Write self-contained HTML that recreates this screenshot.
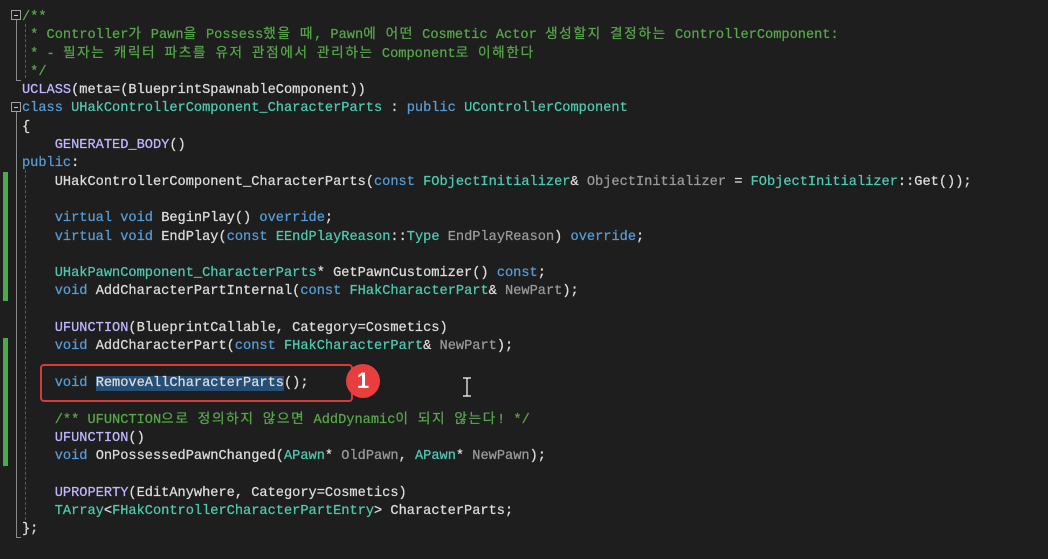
<!DOCTYPE html>
<html><head><meta charset="utf-8"><style>
body{margin:0;background:#1e1e1e;width:1048px;height:559px;overflow:hidden;position:relative}
.c{position:absolute;left:22px;top:9px;font-family:"Liberation Mono","Noto Sans CJK KR",monospace;font-size:13.65px;line-height:18.3px;color:#dcdcdc;white-space:pre;-webkit-text-stroke:0.25px}
.k{letter-spacing:1.65px}
.cm{color:#57a64a}.kw{color:#569cd6}.ty{color:#4ec9b0}.m{color:#beb7ff}.p{color:#9a9a9a}.f{color:#dcdcdc}
.bar{position:absolute;left:3px;width:5px;background:#4caa4c}
.box{position:absolute;left:11px;width:8px;height:8px;border:1px solid #a0a0a0}
.box:after{content:"";position:absolute;left:2px;top:4px;width:4px;height:1px;background:#c8c8c8}
.vl{position:absolute;left:16px;width:1px;background:#8a8a8a}
.dl{position:absolute;left:25px;width:0;border-left:1px dashed #5a5a5a}
.sel{background:#264f78}
</style></head><body>
<div class="bar" style="top:172px;height:129px"></div>
<div class="bar" style="top:338px;height:128px"></div>
<div class="box" style="top:10px"></div>
<div class="vl" style="top:20px;height:60px"></div>
<div style="position:absolute;left:16px;top:80px;width:5px;height:1px;background:#8a8a8a"></div>
<div class="dl" style="top:24px;height:54px"></div>
<div class="box" style="top:102px"></div>
<div class="vl" style="top:112px;height:425px"></div>
<div style="position:absolute;left:16px;top:537px;width:5px;height:1px;background:#8a8a8a"></div>
<div class="dl" style="top:170px;height:360px"></div>
<div class="c"><span class="cm">/**
 * Controller<span class="k">가</span> Pawn<span class="k">을</span> Possess<span class="k">했을</span> <span class="k">때</span>, Pawn<span class="k">에</span> <span class="k">어떤</span> Cosmetic Actor <span class="k">생성할지</span> <span class="k">결정하는</span> ControllerComponent:
 * - <span class="k">필자는</span> <span class="k">캐릭터</span> <span class="k">파츠를</span> <span class="k">유저</span> <span class="k">관점에서</span> <span class="k">관리하는</span> Component<span class="k">로</span> <span class="k">이해한다</span>
 */</span>
<span class="m">UCLASS</span>(meta=(BlueprintSpawnableComponent))
<span class="kw">class</span> <span class="ty">UHakControllerComponent_CharacterParts</span> : <span class="kw">public</span> <span class="ty">UControllerComponent</span>
{
    <span class="m">GENERATED_BODY</span>()
<span class="kw">public</span>:
    <span class="f">UHakControllerComponent_CharacterParts</span>(<span class="kw">const</span> <span class="ty">FObjectInitializer</span>&amp; <span class="p">ObjectInitializer</span> = <span class="ty">FObjectInitializer</span>::<span class="f">Get</span>());

    <span class="kw">virtual</span> <span class="kw">void</span> <span class="f">BeginPlay</span>() <span class="kw">override</span>;
    <span class="kw">virtual</span> <span class="kw">void</span> <span class="f">EndPlay</span>(<span class="kw">const</span> <span class="ty">EEndPlayReason</span>::<span class="ty">Type</span> <span class="p">EndPlayReason</span>) <span class="kw">override</span>;

    <span class="ty">UHakPawnComponent_CharacterParts</span>* <span class="f">GetPawnCustomizer</span>() <span class="kw">const</span>;
    <span class="kw">void</span> <span class="f">AddCharacterPartInternal</span>(<span class="kw">const</span> <span class="ty">FHakCharacterPart</span>&amp; <span class="p">NewPart</span>);

    <span class="m">UFUNCTION</span>(BlueprintCallable, Category=Cosmetics)
    <span class="kw">void</span> <span class="f">AddCharacterPart</span>(<span class="kw">const</span> <span class="ty">FHakCharacterPart</span>&amp; <span class="p">NewPart</span>);

    <span class="kw">void</span> <span class="f sel">RemoveAllCharacterParts</span>();

    <span class="cm">/** UFUNCTION<span class="k">으로</span> <span class="k">정의하지</span> <span class="k">않으면</span> AddDynamic<span class="k">이</span> <span class="k">되지</span> <span class="k">않는다</span>! */</span>
    <span class="m">UFUNCTION</span>()
    <span class="kw">void</span> <span class="f">OnPossessedPawnChanged</span>(<span class="ty">APawn</span>* <span class="p">OldPawn</span>, <span class="ty">APawn</span>* <span class="p">NewPawn</span>);

    <span class="m">UPROPERTY</span>(EditAnywhere, Category=Cosmetics)
    <span class="ty">TArray</span>&lt;<span class="ty">FHakControllerCharacterPartEntry</span>&gt; CharacterParts;
};</div>
<div style="position:absolute;left:40px;top:364px;width:309px;height:34px;border:2px solid #d83a3a;border-radius:4px"></div>
<div style="position:absolute;left:346px;top:364px;width:34px;height:34px;border-radius:50%;background:#e83e3e;color:#fff;font:bold 22px/34px 'Liberation Sans',sans-serif;text-align:center">1</div>
<svg style="position:absolute;left:462px;top:377px" width="10" height="20"><path d="M1 1H9M5 1V19M1 19H9" stroke="#fff" stroke-width="1.2" fill="none"/></svg>
</body></html>
